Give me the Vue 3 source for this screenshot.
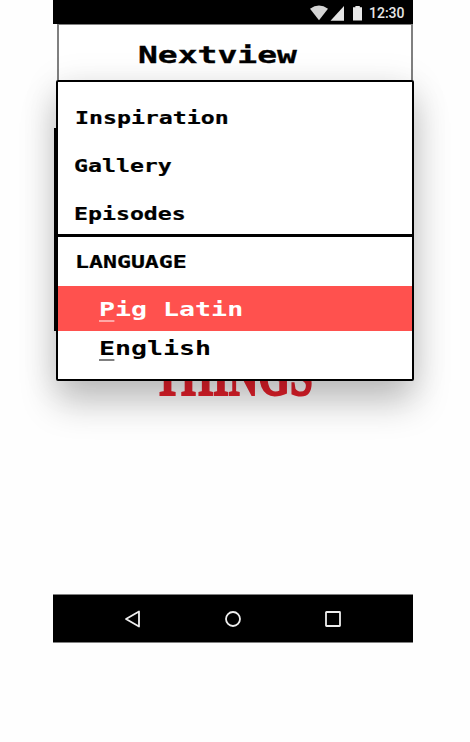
<script setup>
const links = ['Inspiration', 'Gallery', 'Episodes']
const languages = [
  { first: 'P', rest: 'ig Latin', selected: true },
  { first: 'E', rest: 'nglish', selected: false }
]
</script>

<template>
  <main class="screen">
    <div class="phone">
      <div class="status">
        <svg class="status-icons" width="54" height="18" viewBox="0 0 54 18">
          <path d="M0 4.8Q9 -1.8 18 4.8L9 16.2Z" fill="#d4d4d4" />
          <path d="M34 2V16.8H20.5Z" fill="#e4e4e4" />
          <path d="M43 3.2h2.4V2h4.4v1.2H52v13.4h-9Z" fill="#e8e8e8" />
        </svg>
        <span class="clock">12:30</span>
      </div>
      <header class="header"><h1 class="title pixel">Nextview</h1></header>
      <section class="content">
        <div class="poster"></div>
        <div class="logo"><span class="wordmark">THINGS</span></div>
        <div class="rule"></div>
      </section>
      <nav class="menu">
        <div class="links">
          <a v-for="link in links" :key="link" class="link" :class="{ inset: link === 'Inspiration' }"><span class="pixel">{{ link }}</span></a>
        </div>
        <div class="link heading inset"><span class="pixel">LANGUAGE</span></div>
        <a v-for="lang in languages" :key="lang.first" class="option" :class="{ selected: lang.selected }">
          <span class="pixel"><span class="key">{{ lang.first }}</span>{{ lang.rest }}</span>
        </a>
      </nav>
      <footer class="navbar">
        <svg width="18" height="18" viewBox="0 0 18 18"><path d="M2 9L15 1.5V16.5Z" /></svg>
        <svg width="18" height="18" viewBox="0 0 18 18"><circle cx="9" cy="9" r="7" /></svg>
        <svg width="18" height="18" viewBox="0 0 18 18"><rect x="2" y="2" width="14" height="14" rx=".5" /></svg>
      </footer>
    </div>
  </main>
</template>

<style>
body { margin: 0; background: #fff; }
</style>

<style scoped>
.screen { height: 742px; overflow: hidden; background: #fefefe; color: #000; box-sizing: border-box; padding-left: 53px; }
.screen * { box-sizing: border-box; }
.phone { position: relative; width: 360px; height: 643px; display: flex; flex-direction: column; }
.status { height: 24px; flex: none; background: #000; display: flex; align-items: center; justify-content: flex-end; gap: 5px; padding: 2px 8px 0 0; }
.clock { font: 500 14px/18px Roboto, sans-serif; color: #e6e6e6; width: 36px; white-space: nowrap; }
.header { height: 56px; flex: none; margin-left: 4px; border: 2px solid #808080; border-width: 1px 2px 0; padding: 14px 0 0 79px; background: #fff; }
.pixel { display: inline-block; font-family: "DejaVu Sans Mono", monospace; font-weight: 700; white-space: pre; transform-origin: 0 50%; }
.title { margin: 0; font-size: 23px; line-height: 32px; transform: scaleX(1.435); -webkit-text-stroke: .3px; }
.content { flex: 1; display: flex; flex-direction: column; }
.poster { margin: 48px 0 0 1px; width: 5px; height: 203px; background: #000; flex: none; }
.logo { margin: 49px 0 0 101px; width: 200px; height: 20px; flex: none; display: flex; align-items: flex-end; }
.wordmark { flex: none; margin-bottom: -5px; font: 700 60px/60px "Liberation Serif", serif; color: #e8202c; -webkit-text-stroke: 2px #e8202c; white-space: nowrap; transform: scaleX(.68); transform-origin: 0 50%; }
.rule { width: 290px; height: 2px; margin: 26px 0 0 35px; background: #fff; }
.menu { position: absolute; left: 3px; top: 80px; width: 358px; height: 301px; border: 2px solid #000; border-radius: 2px; background: #fff; box-shadow: 0 22px 36px rgba(0, 0, 0, .22), 0 4px 36px rgba(0, 0, 0, .1); display: flex; flex-direction: column; }
.links { height: 155px; padding-top: 12px; border-bottom: 3px solid #000; flex: none; }
.link { height: 48px; display: flex; align-items: center; padding-left: 16px; }
.link .pixel { font-size: 17px; line-height: 24px; transform: scaleX(1.365); -webkit-text-stroke: .2px; }
.link.inset { padding-left: 17px; }
.heading { height: 49px; flex: none; }
.option { height: 45px; flex: none; display: flex; align-items: center; padding-left: 41px; }
.option .pixel { font-size: 19px; line-height: 26px; transform: scaleX(1.4); }
.option:last-child { height: 33px; }
.selected { background: #ff514e; color: #fff; }
.key { border-bottom: 2px solid #808080; }
.selected .key { border-bottom-color: #ffa8a7; }
.navbar { height: 49px; background: #000; border: solid #808080; border-width: 1px 0; display: flex; align-items: center; justify-content: center; gap: 82px; flex: none; }
.navbar svg { fill: none; stroke: #eee; stroke-width: 1.8; stroke-linejoin: round; }
</style>
